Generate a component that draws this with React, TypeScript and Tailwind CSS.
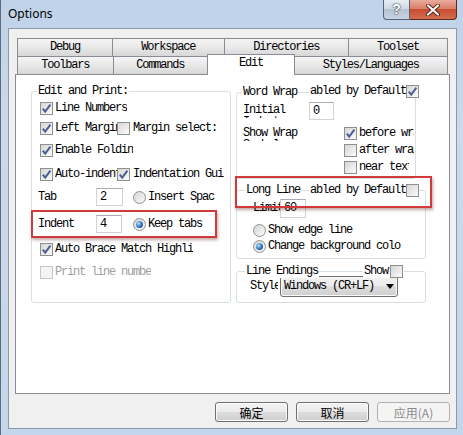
import React from "react";

function Check({ checked, disabled }: { checked?: boolean; disabled?: boolean }) {
  return (
    <span
      className={`flex h-[13px] w-[13px] shrink-0 items-center justify-center border ${
        disabled
          ? "border-[#c6c6c6] bg-[#f4f4f4]"
          : "border-[#8e8f8f] bg-linear-to-br from-[#d6d6d6] to-[#fbfbfb]"
      }`}
    >
      {checked && (
        <svg width="11" height="11" viewBox="0 0 11 11">
          <path d="M1.8 5.6 L4.2 8.6 L9.4 1.6" fill="none" stroke="#4a5f92" strokeWidth="2" />
        </svg>
      )}
    </span>
  );
}

function Radio({ checked }: { checked?: boolean }) {
  return (
    <span className="flex h-[13px] w-[13px] shrink-0 items-center justify-center rounded-full border border-[#8e8f8f] bg-linear-to-br from-[#d4d4d4] to-[#fbfbfb]">
      {checked && (
        <span className="h-[7px] w-[7px] rounded-full bg-[radial-gradient(circle_at_35%_35%,#b6dcf8,#2f74c0_55%,#0f3f78)]" />
      )}
    </span>
  );
}

function CheckRow({
  label,
  checked,
  disabled,
  className = "",
  textClass = "",
}: {
  label: string;
  checked?: boolean;
  disabled?: boolean;
  className?: string;
  textClass?: string;
}) {
  return (
    <div className={`flex h-[16px] items-center ${className}`}>
      <Check checked={checked} disabled={disabled} />
      <span className={`ml-[2px] overflow-hidden whitespace-nowrap ${disabled ? "text-[#a0a0a0]" : ""} ${textClass}`}>
        {label}
      </span>
    </div>
  );
}

function TextBox({ value, className }: { value: string; className: string }) {
  return (
    <div
      className={`flex items-center border border-[#cfd3d8] border-t-[#abadb3] bg-white pl-[3px] ${className}`}
    >
      {value}
    </div>
  );
}

function Group({
  label,
  labelClass,
  className,
  overlay,
  children,
}: {
  label: string;
  labelClass: string;
  className: string;
  overlay?: React.ReactNode;
  children: React.ReactNode;
}) {
  return (
    <div className={`relative rounded-[3px] border border-[#d5dfe5] ${className}`}>
      <span className={`absolute -top-[7px] bg-white px-[1px] leading-[13px] whitespace-nowrap ${labelClass}`}>
        {label}
      </span>
      {overlay}
      {children}
    </div>
  );
}

function Tab({ label, className, selected }: { label: string; className: string; selected?: boolean }) {
  return (
    <div
      className={`flex items-center justify-center border border-b-0 border-[#898c95] ${
        selected
          ? "relative z-10 -mb-px h-[21px] bg-white pb-[3px]"
          : "h-[18px] bg-linear-to-b from-[#f4f4f4] via-[#e8e8e8] to-[#d7d7d7]"
      } ${className}`}
    >
      {label}
    </div>
  );
}

function DlgButton({ label, disabled }: { label: string; disabled?: boolean }) {
  return (
    <div
      className={`flex h-[20px] w-[73px] items-center justify-center rounded-[3px] border font-['Noto_Sans_CJK_SC',sans-serif] text-[12px] tracking-normal ${
        disabled
          ? "border-[#adb2b5] bg-[#f4f4f4] text-[#8a8a8a]"
          : "border-[#707070] bg-[linear-gradient(#f2f2f2,#ebebeb_50%,#dddddd_50%,#cfcfcf)] text-black shadow-[inset_0_0_0_1px_#fbfbfb]"
      }`}
    >
      {label}
    </div>
  );
}

export default function App() {
  return (
    <div className="flex h-[435px] w-[463px] flex-col overflow-hidden border-l border-[#5d6b7c] bg-[linear-gradient(#bfd2e8,#cadaec_30%,#c4d6eb)]">
      {/* title bar */}
      <div className="flex h-[28px] shrink-0 items-start justify-between">
        <span className="pl-[7px] pt-[6px] font-['Noto_Sans',sans-serif] text-[12px] leading-[16px] text-black">
          Options
        </span>
        <div className="flex pr-[6px]">
          <div className="flex h-[20px] w-[27px] items-center justify-center rounded-bl-[4px] border border-t-0 border-[#556479] bg-[linear-gradient(#e8edf3,#cdd7e3_50%,#b5c2d2_50%,#c9d5e3)] font-['Liberation_Sans',sans-serif] text-[14px] font-bold text-white [text-shadow:0_0_1px_#2a3444,0_0_2px_#2a3444]">
            ?
          </div>
          <div className="flex h-[20px] w-[47px] items-center justify-center rounded-br-[4px] border border-t-0 border-l-0 border-[#5b2a22] bg-[linear-gradient(#eaab9c,#d98069_45%,#c74d35_50%,#d46c4e)]">
            <svg width="14" height="12" viewBox="0 0 14 12">
              <path d="M2 1.5 L12 10.5 M12 1.5 L2 10.5" stroke="#5a1e14" strokeWidth="4" strokeLinecap="round" />
              <path d="M2 1.5 L12 10.5 M12 1.5 L2 10.5" stroke="#ffffff" strokeWidth="2.2" strokeLinecap="round" />
            </svg>
          </div>
        </div>
      </div>

      {/* dialog body */}
      <div className="ml-[7px] mr-[6px] h-[401px] border border-[#8e99a6] bg-[#f0f0f0] px-[6px] pt-[9px] font-['Liberation_Mono',monospace] text-[12px] leading-[13px] tracking-[-1.2px] text-black">
        <div className="flex h-[18px] px-[2px]">
          <Tab label="Debug" className="w-[96px]" />
          <Tab label="Workspace" className="-ml-px w-[113px]" />
          <Tab label="Directories" className="-ml-px w-[126px]" />
          <Tab label="Toolset" className="-ml-px w-[100px]" />
        </div>
        <div className="flex h-[18px] items-end px-[2px]">
          <Tab label="Toolbars" className="w-[97px]" />
          <Tab label="Commands" className="-ml-px w-[96px]" />
          <Tab label="Edit" className="-ml-px w-[88px]" selected />
          <Tab label="Styles/Languages" className="-ml-px w-[155px]" />
        </div>

        <div className="relative flex h-[320px] border border-[#898c95] bg-white pl-[15px] pt-[16px]">
          {/* left group */}
          <Group label="Edit and Print:" labelClass="left-[5px]" className="h-[212px] w-[200px] shrink-0">
            <div className="flex flex-col pl-[8px] pt-[8px]">
              <CheckRow label="Line Numbers" checked />
              <div className="mt-[4px] flex h-[16px] items-center">
                <Check checked />
                <span className="ml-[2px] w-[62px] overflow-hidden whitespace-nowrap">Left Margin</span>
                <Check />
                <span className="ml-[3px] whitespace-nowrap">Margin select:</span>
              </div>
              <CheckRow label="Enable Foldin" checked className="mt-[6px]" />
              <div className="mt-[8px] flex h-[16px] items-center">
                <Check checked />
                <span className="ml-[2px] w-[62px] overflow-hidden whitespace-nowrap">Auto-indent</span>
                <Check checked />
                <span className="ml-[3px] whitespace-nowrap">Indentation Gui</span>
              </div>
              <div className="-ml-[2px] mt-[6px] flex h-[18px] items-center">
                <span className="w-[58px]">Tab</span>
                <TextBox value="2" className="h-[18px] w-[27px]" />
                <span className="ml-[10px]">
                  <Radio />
                </span>
                <span className="ml-[2px] whitespace-nowrap">Insert Spac</span>
              </div>
              <div className="-ml-[2px] mt-[9px] flex h-[18px] items-center">
                <span className="w-[58px]">Indent</span>
                <TextBox value="4" className="h-[18px] w-[26px]" />
                <span className="ml-[11px]">
                  <Radio checked />
                </span>
                <span className="ml-[2px] whitespace-nowrap">Keep tabs</span>
              </div>
              <CheckRow label="Auto Brace Match Highli" checked className="mt-[8px]" />
              <CheckRow label="Print line numbe" disabled className="mt-[7px]" />
            </div>
          </Group>

          {/* right column */}
          <div className="ml-[5px] flex flex-col pt-[1px]">
            <Group
              label="Word Wrap"
              labelClass="left-[5px]"
              className="h-[87px] w-[180px]"
              overlay={
                <div className="absolute -top-[8px] left-[72px] z-10 flex items-center bg-white pl-[1px]">
                  <span className="whitespace-nowrap">abled by Default</span>
                  <Check checked />
                </div>
              }
            >
              <div className="flex flex-col pl-[6px] pt-[9px]">
                <div className="flex items-start">
                  <div className="mt-[2px] h-[14px] w-[66px] overflow-hidden leading-[12px]">
                    Initial
                    <br />
                    Indent
                  </div>
                  <TextBox value="0" className="h-[18px] w-[25px]" />
                </div>
                <div className="mt-[5px] flex items-start">
                  <div className="mt-[2px] h-[14px] w-[101px] overflow-hidden leading-[12px]">
                    Show Wrap
                    <br />
                    Symbols
                  </div>
                  <div className="flex flex-col gap-[1px]">
                    <CheckRow label="before wrap" checked textClass="w-[55px]" />
                    <CheckRow label="after wrap" textClass="w-[55px]" />
                    <CheckRow label="near text" textClass="w-[50px]" />
                  </div>
                </div>
              </div>
            </Group>

            <Group
              label="Long Line"
              labelClass="left-[8px]"
              className="mt-[11px] h-[69px] w-[190px]"
              overlay={
                <div className="absolute -top-[7px] left-[72px] z-10 flex items-center bg-white pl-[1px]">
                  <span className="whitespace-nowrap">abled by Default</span>
                  <Check />
                </div>
              }
            >
              <div className="flex flex-col pl-[16px] pt-[8px]">
                <div className="flex h-[18px] items-center">
                  <span className="w-[27px] overflow-hidden whitespace-nowrap">Limit</span>
                  <TextBox value="60" className="h-[19px] w-[26px]" />
                </div>
                <div className="mt-[5px] flex h-[16px] items-center">
                  <Radio />
                  <span className="ml-[2px] whitespace-nowrap">Show edge line</span>
                </div>
                <div className="flex h-[16px] items-center">
                  <Radio checked />
                  <span className="ml-[2px] w-[133px] overflow-hidden whitespace-nowrap">
                    Change background color
                  </span>
                </div>
              </div>
            </Group>

            <Group
              label="Line Endings"
              labelClass="left-[8px]"
              className="mt-[12px] h-[32px] w-[190px]"
              overlay={
                <div className="absolute -top-[7px] left-[126px] z-10 flex items-center bg-white px-[1px]">
                  <span className="whitespace-nowrap">Show</span>
                  <span className="ml-[2px]">
                    <Check />
                  </span>
                </div>
              }
            >
              <div className="flex items-center pl-[13px] pt-[4px]">
                <span className="w-[28px] overflow-hidden whitespace-nowrap">Style</span>
                <div className="ml-[2px] flex h-[21px] w-[118px] items-center rounded-[3px] border border-[#707070] bg-[linear-gradient(#f2f2f2,#ebebeb_50%,#dddddd_50%,#cfcfcf)] pl-[3px] shadow-[inset_0_0_0_1px_#fafafa]">
                  <span className="flex-1 whitespace-nowrap">Windows (CR+LF)</span>
                  <svg width="8" height="5" viewBox="0 0 8 5" className="mr-[3px]">
                    <path d="M0 0 H8 L4 5 Z" fill="#000" />
                  </svg>
                </div>
              </div>
            </Group>
          </div>

          {/* highlight frames */}
          <div className="absolute left-[15px] top-[135px] h-[28px] w-[186px] border-2 border-[#cf3a3a] shadow-[1px_2px_3px_rgba(80,0,0,0.35)]" />
          <div className="absolute left-[219px] top-[101px] z-20 h-[32px] w-[197px] border-2 border-[#cf3a3a] shadow-[1px_2px_3px_rgba(80,0,0,0.35)]" />
        </div>

        <div className="mt-[8px] flex justify-end gap-[8px]">
          <DlgButton label="确定" />
          <DlgButton label="取消" />
          <DlgButton label="应用(A)" disabled />
        </div>
      </div>
    </div>
  );
}
